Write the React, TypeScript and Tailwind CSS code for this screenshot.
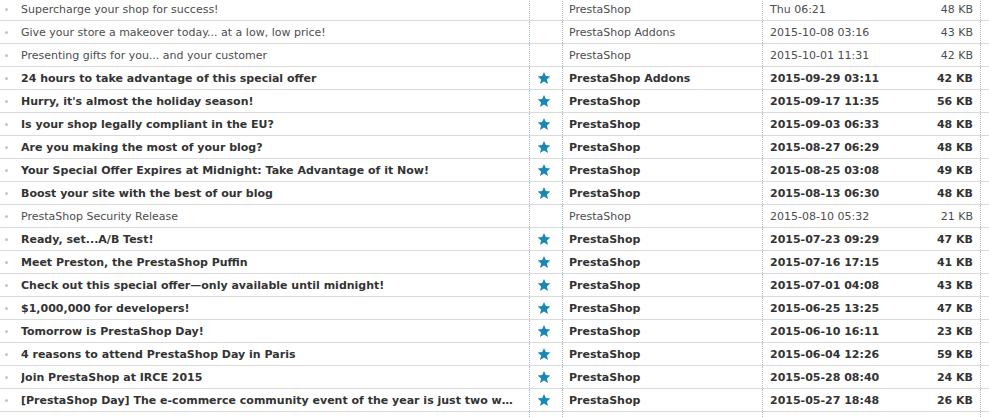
type Msg = {
  subject: string;
  from: string;
  date: string;
  size: string;
  unread: boolean;
};

const messages: Msg[] = [
  { subject: "Supercharge your shop for success!", from: "PrestaShop", date: "Thu 06:21", size: "48 KB", unread: false },
  { subject: "Give your store a makeover today... at a low, low price!", from: "PrestaShop Addons", date: "2015-10-08 03:16", size: "43 KB", unread: false },
  { subject: "Presenting gifts for you... and your customer", from: "PrestaShop", date: "2015-10-01 11:31", size: "42 KB", unread: false },
  { subject: "24 hours to take advantage of this special offer", from: "PrestaShop Addons", date: "2015-09-29 03:11", size: "42 KB", unread: true },
  { subject: "Hurry, it's almost the holiday season!", from: "PrestaShop", date: "2015-09-17 11:35", size: "56 KB", unread: true },
  { subject: "Is your shop legally compliant in the EU?", from: "PrestaShop", date: "2015-09-03 06:33", size: "48 KB", unread: true },
  { subject: "Are you making the most of your blog?", from: "PrestaShop", date: "2015-08-27 06:29", size: "48 KB", unread: true },
  { subject: "Your Special Offer Expires at Midnight: Take Advantage of it Now!", from: "PrestaShop", date: "2015-08-25 03:08", size: "49 KB", unread: true },
  { subject: "Boost your site with the best of our blog", from: "PrestaShop", date: "2015-08-13 06:30", size: "48 KB", unread: true },
  { subject: "PrestaShop Security Release", from: "PrestaShop", date: "2015-08-10 05:32", size: "21 KB", unread: false },
  { subject: "Ready, set...A/B Test!", from: "PrestaShop", date: "2015-07-23 09:29", size: "47 KB", unread: true },
  { subject: "Meet Preston, the PrestaShop Puffin", from: "PrestaShop", date: "2015-07-16 17:15", size: "41 KB", unread: true },
  { subject: "Check out this special offer\u2014only available until midnight!", from: "PrestaShop", date: "2015-07-01 04:08", size: "43 KB", unread: true },
  { subject: "$1,000,000 for developers!", from: "PrestaShop", date: "2015-06-25 13:25", size: "47 KB", unread: true },
  { subject: "Tomorrow is PrestaShop Day!", from: "PrestaShop", date: "2015-06-10 16:11", size: "23 KB", unread: true },
  { subject: "4 reasons to attend PrestaShop Day in Paris", from: "PrestaShop", date: "2015-06-04 12:26", size: "59 KB", unread: true },
  { subject: "Join PrestaShop at IRCE 2015", from: "PrestaShop", date: "2015-05-28 08:40", size: "24 KB", unread: true },
  { subject: "[PrestaShop Day] The e-commerce community event of the year is just two weeks away", from: "PrestaShop", date: "2015-05-27 18:48", size: "26 KB", unread: true },
];

function Star() {
  return (
    <svg width="14" height="14" viewBox="0 0 24 24" className="block">
      <path
        d="M12 1.5l3.1 7.2 7.8.7-5.9 5.2 1.8 7.7L12 18.2l-6.8 4.1 1.8-7.7-5.9-5.2 7.8-.7z"
        fill="#1b87b3"
      />
    </svg>
  );
}

function Row({ m }: { m?: Msg }) {
  const weight = m?.unread ? "font-bold text-[#333]" : "font-normal text-[#4d4d4d]";
  return (
    <div className={`flex h-[23px] ${m ? "border-b border-[#dadada]" : ""}`}>
      <div className="w-[529px] flex items-center min-w-0">
        <div className="w-[21px] flex justify-center pr-[9px] shrink-0">
          {m && <span className="block w-[3px] h-[3px] rounded-full bg-[#c4c4c4]" />}
        </div>
        <div className={`truncate pr-[10px] ${weight}`}>{m?.subject}</div>
      </div>
      <div className="w-[33px] border-l border-dotted border-[#a9bccb] flex items-center justify-center pr-[4px]">
        {m?.unread && <Star />}
      </div>
      <div className={`w-[200px] border-l border-dotted border-[#a9bccb] flex items-center pl-[6px] truncate ${weight}`}>
        {m?.from}
      </div>
      <div className={`w-[150px] border-l border-dotted border-[#bdbdbd] flex items-center pl-[7px] ${weight}`}>
        {m?.date}
      </div>
      <div className={`w-[68px] flex items-center justify-end pr-[7px] ${weight}`}>{m?.size}</div>
      <div className="flex-1 border-l border-dotted border-[#bdbdbd]" />
    </div>
  );
}

export default function App() {
  return (
    <div
      className="w-[989px] h-[417px] overflow-hidden bg-white text-[11px] leading-none"
      style={{ fontFamily: '"DejaVu Sans", Verdana, sans-serif' }}
    >
      <div className="-mt-[2px]">
        {messages.map((m, i) => (
          <Row key={i} m={m} />
        ))}
        <Row />
      </div>
    </div>
  );
}
